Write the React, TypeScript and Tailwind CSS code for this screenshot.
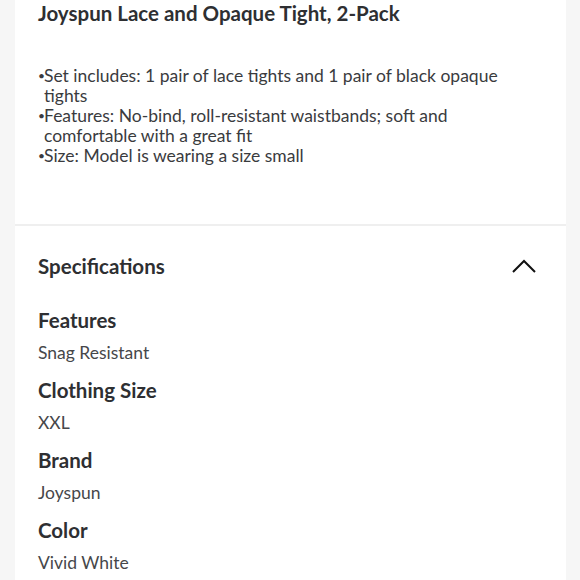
export default function App() {
  const bullets = [
    'Set includes: 1 pair of lace tights and 1 pair of black opaque tights',
    'Features: No-bind, roll-resistant waistbands; soft and comfortable with a great fit',
    'Size: Model is wearing a size small',
  ];
  const specs = [
    { label: 'Features', value: 'Snag Resistant' },
    { label: 'Clothing Size', value: 'XXL' },
    { label: 'Brand', value: 'Joyspun' },
    { label: 'Color', value: 'Vivid White' },
  ];

  return (
    <div className="w-[580px] h-[580px] overflow-hidden bg-[#f6f6f6] text-[#2e2f32]" style={{ fontFamily: 'Lato, "Noto Sans", sans-serif' }}>
      <div className="ml-[15px] w-[551px] bg-white h-[224px] pl-[23px] pt-[1px]">
        <h1 className="text-[20.5px] font-bold leading-[28px] -mt-[2px]">Joyspun Lace and Opaque Tight, 2-Pack</h1>
        <ul className="mt-[39px] w-[466px] text-[17.5px] leading-[20px] text-[#3a3b3e]">
          {bullets.map((b) => (
            <li key={b} className="flex">
              <span className="w-[6px] shrink-0 text-[12px]">•</span>
              <span>{b}</span>
            </li>
          ))}
        </ul>
      </div>
      <div className="ml-[15px] w-[551px] bg-[#efefef] h-[2px]" />
      <div className="ml-[15px] w-[551px] bg-white h-[360px] pl-[23px] pr-[30px] pt-[26px]">
        <div className="flex items-center justify-between h-[28px]">
          <h2 className="text-[20.5px] font-bold">Specifications</h2>
          <svg width="24" height="14" viewBox="0 0 24 14" fill="none" stroke="#111" strokeWidth="2">
            <path d="M1 13 L12 2 L23 13" />
          </svg>
        </div>
        <div className="mt-[26px]">
          {specs.map((s) => (
            <div key={s.label} className="h-[70px]">
              <div className="text-[20.5px] font-bold leading-[28px]">{s.label}</div>
              <div className="text-[17.5px] leading-[22px] mt-[8px] text-[#46474a]">{s.value}</div>
            </div>
          ))}
        </div>
      </div>
    </div>
  );
}
